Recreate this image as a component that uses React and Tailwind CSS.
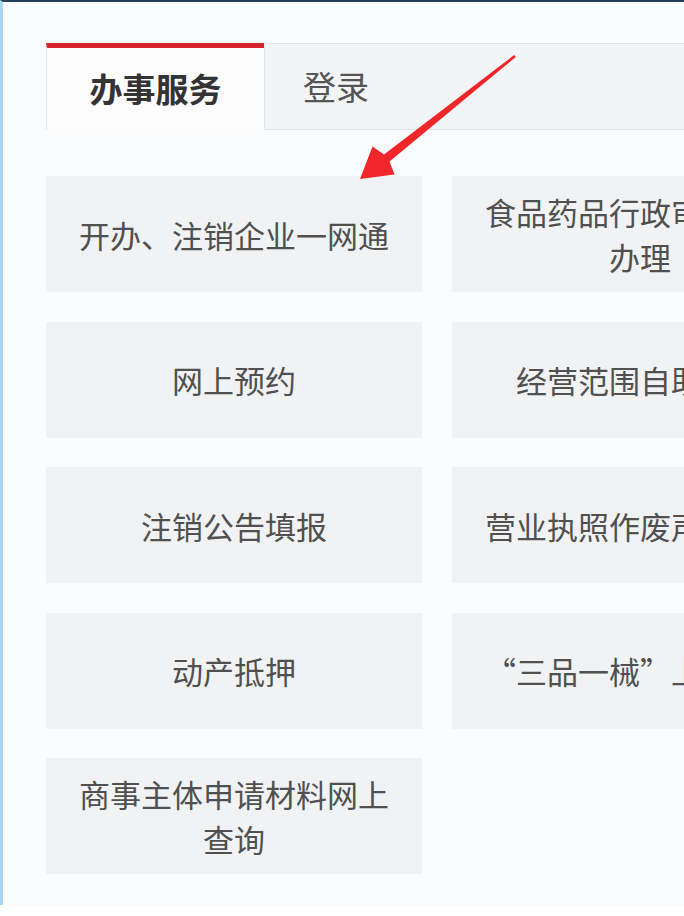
const leftCards = [
  "开办、注销企业一网通",
  "网上预约",
  "注销公告填报",
  "动产抵押",
  "商事主体申请材料网上查询",
];

const rightCards = [
  "食品药品行政审批事项办理",
  "经营范围自助查询",
  "营业执照作废声明公告",
  "“三品一械”上网备案",
];

const Card = ({ text }) => (
  <div className="h-[116px] bg-[#f1f2f4] flex items-center justify-center text-center px-[20px] text-[31px] leading-[45px] text-[#505050]">
    <span>{text}</span>
  </div>
);

const Arrow = () => (
  <svg
    className="absolute left-0 top-0 pointer-events-none"
    width="684"
    height="916"
    viewBox="0 0 684 916"
  >
    <polygon
      points="360,179 372.5,146.5 384,154.5 514.2,55 515.8,57 389.5,161.5 394.5,174.5"
      fill="#f0262a"
    />
  </svg>
);

export default function App() {
  const cells = [];
  for (let i = 0; i < leftCards.length; i++) {
    cells.push(<Card key={"l" + i} text={leftCards[i]} />);
    if (rightCards[i]) cells.push(<Card key={"r" + i} text={rightCards[i]} />);
  }

  return (
    <div
      lang="zh-CN"
      className="relative w-[684px] h-[916px] overflow-hidden bg-white"
      style={{ fontFamily: '"Noto Sans CJK SC", "Noto Sans", sans-serif' }}
    >
      <div className="h-[905px] border-t-2 border-l-[3px] border-t-[#23405f] border-l-[#a9d6f3] bg-[#fafbfc] pt-[41px] pl-[43px]">
        {/* tabs */}
        <div className="flex h-[87px] w-[700px]">
          <div className="w-[218px] border-t-[5px] border-t-[#d7262b] border-l border-l-[#e3e4e6] bg-[#fcfcfd] flex items-center justify-center text-[33px] font-bold text-[#333]">
            办事服务
          </div>
          <div className="flex-1 bg-[#f3f4f6] border-t border-b border-l border-[#e3e4e6] flex items-center pl-[38px] text-[33px] text-[#555]">
            登录
          </div>
        </div>

        {/* service grid */}
        <div className="mt-[46px] grid grid-cols-[376px_376px] gap-x-[30px] gap-y-[29.5px] w-max">
          {cells}
        </div>
      </div>
      <Arrow />
    </div>
  );
}
